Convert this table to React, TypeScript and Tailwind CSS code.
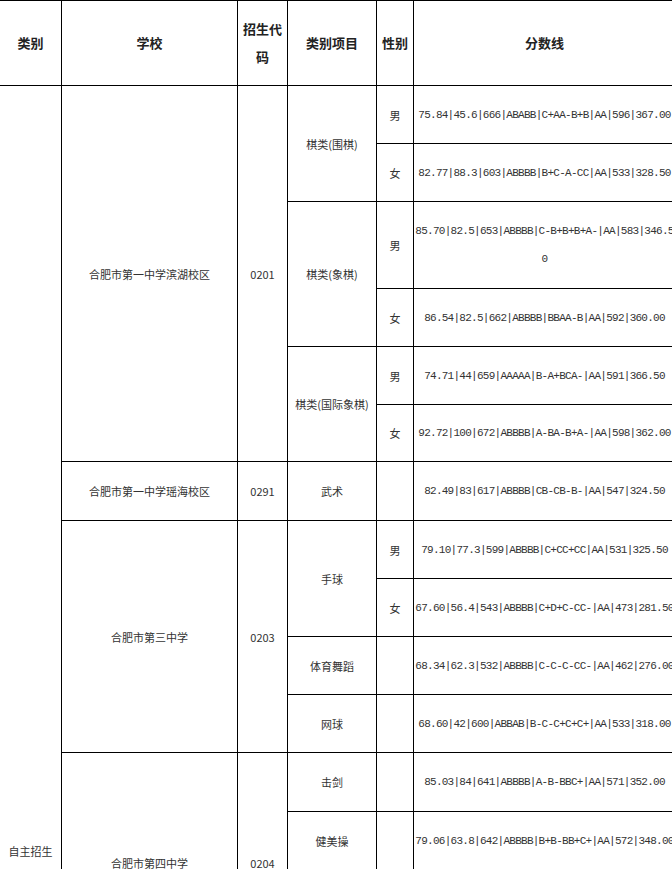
const cn = "font-['Noto_Sans_CJK_SC','Noto_Sans',sans-serif]";
const mono = "font-['Liberation_Mono','DejaVu_Sans_Mono',monospace]";

const cell = "border border-black text-center align-middle p-0 leading-[28px]";
const txt = `${cell} ${cn} text-[11px] text-[#333]`;
const sex = `${cell} ${cn} text-[11px] text-[#333]`;
const score = `${cell} ${mono} text-[11px] tracking-[-0.73px] text-[#333] break-all`;

function Header() {
  const th = `${cell} ${cn} text-[13px] font-bold text-[#222]`;
  return (
    <tr className="h-[85px]">
      <th className={th}>类别</th>
      <th className={th}>学校</th>
      <th className={th}>招生代码</th>
      <th className={th}>类别项目</th>
      <th className={th}>性别</th>
      <th className={th}>分数线</th>
    </tr>
  );
}

export default function App() {
  return (
    <div className="w-[672px] h-[869px] overflow-hidden bg-white">
      <table className="table-fixed border-collapse w-[676px] -ml-px">
        <colgroup>
          <col className="w-[62px]" />
          <col className="w-[176px]" />
          <col className="w-[50px]" />
          <col className="w-[89px]" />
          <col className="w-[37px]" />
          <col className="w-[262px]" />
        </colgroup>
        <thead>
          <Header />
        </thead>
        <tbody>
          {/* 滨湖校区 */}
          <tr className="h-[58px]">
            <td rowSpan={16} className={`${txt} !align-top pt-[751px]`}>
              自主招生
            </td>
            <td rowSpan={6} className={txt}>合肥市第一中学滨湖校区</td>
            <td rowSpan={6} className={txt}>0201</td>
            <td rowSpan={2} className={txt}>棋类(围棋)</td>
            <td className={sex}>男</td>
            <td className={score}>75.84|45.6|666|ABABB|C+AA-B+B|AA|596|367.00</td>
          </tr>
          <tr className="h-[58px]">
            <td className={sex}>女</td>
            <td className={score}>82.77|88.3|603|ABBBB|B+C-A-CC|AA|533|328.50</td>
          </tr>
          <tr className="h-[87px]">
            <td rowSpan={2} className={txt}>棋类(象棋)</td>
            <td className={sex}>男</td>
            <td className={score}>85.70|82.5|653|ABBBB|C-B+B+B+A-|AA|583|346.50</td>
          </tr>
          <tr className="h-[58px]">
            <td className={sex}>女</td>
            <td className={score}>86.54|82.5|662|ABBBB|BBAA-B|AA|592|360.00</td>
          </tr>
          <tr className="h-[58px]">
            <td rowSpan={2} className={txt}>棋类(国际象棋)</td>
            <td className={sex}>男</td>
            <td className={score}>74.71|44|659|AAAAA|B-A+BCA-|AA|591|366.50</td>
          </tr>
          <tr className="h-[57px]">
            <td className={sex}>女</td>
            <td className={score}>92.72|100|672|ABBBB|A-BA-B+A-|AA|598|362.00</td>
          </tr>

          {/* 瑶海校区 */}
          <tr className="h-[59px]">
            <td className={txt}>合肥市第一中学瑶海校区</td>
            <td className={txt}>0291</td>
            <td className={txt}>武术</td>
            <td className={sex}></td>
            <td className={score}>82.49|83|617|ABBBB|CB-CB-B-|AA|547|324.50</td>
          </tr>

          {/* 第三中学 */}
          <tr className="h-[58px]">
            <td rowSpan={4} className={txt}>合肥市第三中学</td>
            <td rowSpan={4} className={txt}>0203</td>
            <td rowSpan={2} className={txt}>手球</td>
            <td className={sex}>男</td>
            <td className={score}>79.10|77.3|599|ABBBB|C+CC+CC|AA|531|325.50</td>
          </tr>
          <tr className="h-[58px]">
            <td className={sex}>女</td>
            <td className={score}>67.60|56.4|543|ABBBB|C+D+C-CC-|AA|473|281.50</td>
          </tr>
          <tr className="h-[58px]">
            <td className={txt}>体育舞蹈</td>
            <td className={sex}></td>
            <td className={score}>68.34|62.3|532|ABBBB|C-C-C-CC-|AA|462|276.00</td>
          </tr>
          <tr className="h-[58px]">
            <td className={txt}>网球</td>
            <td className={sex}></td>
            <td className={score}>68.60|42|600|ABBAB|B-C-C+C+C+|AA|533|318.00</td>
          </tr>

          {/* 第四中学 */}
          <tr className="h-[59px]">
            <td rowSpan={3} className={txt}>合肥市第四中学</td>
            <td rowSpan={3} className={txt}>0204</td>
            <td className={txt}>击剑</td>
            <td className={sex}></td>
            <td className={score}>85.03|84|641|ABBBB|A-B-BBC+|AA|571|352.00</td>
          </tr>
          <tr className="h-[58px]">
            <td className={txt}>健美操</td>
            <td className={sex}></td>
            <td className={score}>79.06|63.8|642|ABBBB|B+B-BB+C+|AA|572|348.00</td>
          </tr>
          <tr className="h-[103px]">
            <td className={txt}></td>
            <td className={sex}></td>
            <td className={score}></td>
          </tr>
        </tbody>
      </table>
    </div>
  );
}
